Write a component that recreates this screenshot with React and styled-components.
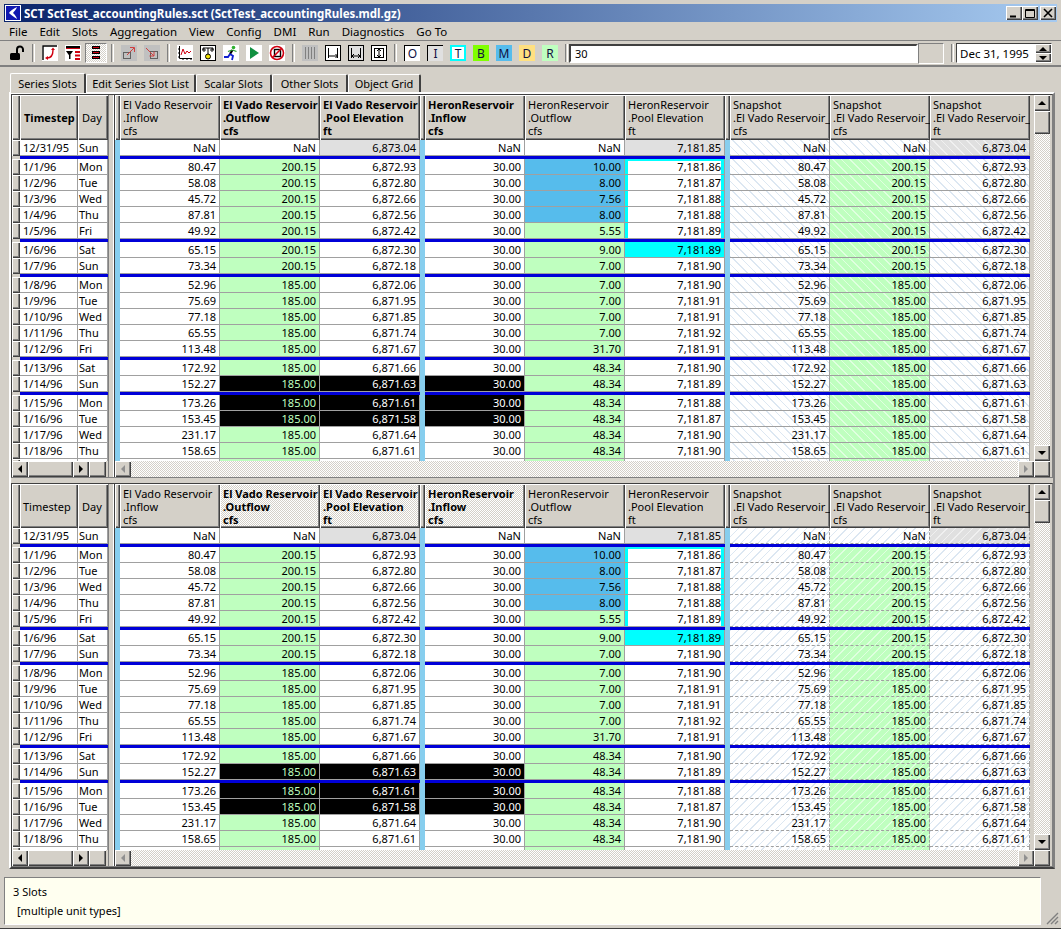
import React from 'react'
import styled, { createGlobalStyle, css } from 'styled-components'

const GREY = '#d4d0c8'
const BLUE = '#56bcec'
const GREEN = '#bfffbf'
const CYAN = '#00ffff'

const raised = css`
    box-shadow: inset 1px 1px 0 #fff, inset -1px -1px 0 #404040, inset -2px -2px 0 #808080;
`
const dither = css`
    background: repeating-conic-gradient(#fff 0 25%, ${GREY} 0 50%) 0 0 / 2px 2px;
`

const rows = [
    ['1/1/96', 'Mon', '80.47', '200.15', '6,872.93', '10.00', '7,181.86'],
    ['1/2/96', 'Tue', '58.08', '200.15', '6,872.80', '8.00', '7,181.87'],
    ['1/3/96', 'Wed', '45.72', '200.15', '6,872.66', '7.56', '7,181.88'],
    ['1/4/96', 'Thu', '87.81', '200.15', '6,872.56', '8.00', '7,181.88'],
    ['1/5/96', 'Fri', '49.92', '200.15', '6,872.42', '5.55', '7,181.89', true],
    ['1/6/96', 'Sat', '65.15', '200.15', '6,872.30', '9.00', '7,181.89'],
    ['1/7/96', 'Sun', '73.34', '200.15', '6,872.18', '7.00', '7,181.90', true],
    ['1/8/96', 'Mon', '52.96', '185.00', '6,872.06', '7.00', '7,181.90'],
    ['1/9/96', 'Tue', '75.69', '185.00', '6,871.95', '7.00', '7,181.91'],
    ['1/10/96', 'Wed', '77.18', '185.00', '6,871.85', '7.00', '7,181.91'],
    ['1/11/96', 'Thu', '65.55', '185.00', '6,871.74', '7.00', '7,181.92'],
    ['1/12/96', 'Fri', '113.48', '185.00', '6,871.67', '31.70', '7,181.91', true],
    ['1/13/96', 'Sat', '172.92', '185.00', '6,871.66', '48.34', '7,181.90'],
    ['1/14/96', 'Sun', '152.27', '185.00', '6,871.63', '48.34', '7,181.89', true],
    ['1/15/96', 'Mon', '173.26', '185.00', '6,871.61', '48.34', '7,181.88'],
    ['1/16/96', 'Tue', '153.45', '185.00', '6,871.58', '48.34', '7,181.87'],
    ['1/17/96', 'Wed', '231.17', '185.00', '6,871.64', '48.34', '7,181.90'],
    ['1/18/96', 'Thu', '158.65', '185.00', '6,871.61', '48.34', '7,181.90'],
    ['', '', '', '', '', '', ''],
]

const heads = [
    [
        { a: 'El Vado Reservoir', b: '.Inflow', c: 'cfs' },
        { a: 'El Vado Reservoir', b: '.Outflow', c: 'cfs', bold: true },
        { a: 'El Vado Reservoir', b: '.Pool Elevation', c: 'ft', bold: true },
    ],
    [
        { a: 'HeronReservoir', b: '.Inflow', c: 'cfs', bold: true },
        { a: 'HeronReservoir', b: '.Outflow', c: 'cfs' },
        { a: 'HeronReservoir', b: '.Pool Elevation', c: 'ft' },
    ],
    [
        { a: 'Snapshot', b: '.El Vado Reservoir_', c: 'cfs' },
        { a: 'Snapshot', b: '.El Vado Reservoir_', c: 'cfs' },
        { a: 'Snapshot', b: '.El Vado Reservoir_', c: 'ft' },
    ],
]

const first = [
    [['NaN', 'white'], ['NaN', 'white'], ['6,873.04', 'grey']],
    [['NaN', 'white'], ['NaN', 'white'], ['7,181.85', 'grey']],
    [['NaN', 'white'], ['NaN', 'white'], ['6,873.04', 'grey']],
]

// cells of one day for the three groups of columns
const cellsFor = (r, i) => {
    const black = i >= 13 && i <= 15
    const heronOut = i < 4 ? 'blue' : 'green'
    const heronPool = i === 5 ? 'cyan' : i === 0 ? 'cyanTop' : i < 5 ? 'cyanSide' : 'white'
    return [
        [[r[2], 'white'], [r[3], black ? 'blackGreen' : 'green'], [r[4], black ? 'black' : 'white']],
        [[r[0] ? '30.00' : '', black ? 'black' : 'white'], [r[5], heronOut], [r[6], heronPool]],
        [[r[2], 'white'], [r[3], 'green'], [r[4], 'white']],
    ]
}

const LockIcon = () => (
    <svg width="16" height="16" viewBox="0 0 16 16">
        <rect x="1" y="8" width="10" height="7" rx="1.5" fill="#000" />
        <path d="M8 8V4.5a3 3 0 0 1 6 0V7" fill="none" stroke="#000" strokeWidth="2" />
    </svg>
)
const ArrowsIcon = () => (
    <svg width="16" height="16" viewBox="0 0 16 16">
        <rect width="16" height="16" fill="#fff" />
        <path d="M1 15V1h14" fill="none" stroke="#000" strokeWidth="1.4" />
        <path d="M5 13c4 0 6-3 6-8" fill="none" stroke="#d00010" strokeWidth="1.4" />
        <path d="M9 5l2-2.500 2 2.500zM6 11v4l-3-2z" fill="#d00010" />
    </svg>
)
const FilterIcon = () => (
    <svg width="16" height="16" viewBox="0 0 16 16">
        <rect width="16" height="16" fill="#fff" />
        <rect x="1" y="1" width="14" height="2" fill="#000" />
        <rect x="1" y="3" width="14" height="1" fill="#d00010" />
        <path d="M1 6h7l-3.500 5z" fill="#000" />
        <rect x="4" y="10" width="1.500" height="4" fill="#000" />
        <path d="M10 6h5v2h-5zM10 9.500h5v2h-5zM10 13h5v2h-5z" fill="#d00010" />
    </svg>
)
const StackIcon = () => (
    <svg width="10" height="14" viewBox="0 0 10 14">
        <rect x="1" y="0" width="8" height="3" fill="#000" />
        <rect x="2" y="1" width="6" height="1" fill="#d00010" />
        <rect x="1" y="5" width="8" height="3" fill="#000" />
        <rect x="2" y="6" width="6" height="1" fill="#d00010" />
        <rect x="1" y="10" width="8" height="3" fill="#000" />
        <rect x="2" y="11" width="6" height="1" fill="#d00010" />
    </svg>
)
const ExportIcon = () => (
    <svg width="16" height="16" viewBox="0 0 16 16">
        <rect width="16" height="16" fill="#c0c0c0" />
        <rect x="2.500" y="7.500" width="7" height="6" fill="none" stroke="#606060" />
        <path d="M6 10l7-7M9 2.500h4.500V7" fill="none" stroke="#d04040" />
    </svg>
)
const ImportIcon = () => (
    <svg width="16" height="16" viewBox="0 0 16 16">
        <rect width="16" height="16" fill="#c0c0c0" />
        <rect x="6.500" y="6.500" width="7" height="7" fill="none" stroke="#606060" />
        <path d="M2 3l8 8M10 6.500V11H5.500" fill="none" stroke="#d04040" />
    </svg>
)
const ChartIcon = () => (
    <svg width="16" height="16" viewBox="0 0 16 16">
        <rect width="16" height="16" fill="#fff" />
        <path d="M2.500 1v12.500H15M1 4h1.500M1 8h1.500M1 12h1.500M6 13.500V15M10 13.500V15M14 13.500V15" fill="none" stroke="#000" />
        <path d="M4 10l2-6 2 5 2-3 2 2 2-2" fill="none" stroke="#d00010" />
    </svg>
)
const GaugeIcon = () => (
    <svg width="16" height="16" viewBox="0 0 16 16">
        <rect x=".5" y=".5" width="15" height="15" fill="#fff" stroke="#000" />
        <path d="M3 5V3h10v2M8 3v7" fill="none" stroke="#000" />
        <circle cx="4" cy="5" r="1.200" fill="none" stroke="#000" />
        <circle cx="12" cy="5" r="1.200" fill="none" stroke="#000" />
        <circle cx="8" cy="11.500" r="2.500" fill="#f0e000" stroke="#000" />
    </svg>
)
const RunnerIcon = () => (
    <svg width="16" height="16" viewBox="0 0 16 16">
        <rect width="16" height="16" fill="#fff" />
        <circle cx="10.500" cy="2.500" r="1.800" fill="#30b030" />
        <path d="M9.500 5L7 9" stroke="#000" strokeWidth="2.200" />
        <path d="M9.500 5l4 1.500M9 5L5 6.500" stroke="#30a030" strokeWidth="1.300" fill="none" />
        <path d="M7 9l3 2-1 4M7 9l-2 3H1" stroke="#1020d0" strokeWidth="1.800" fill="none" />
    </svg>
)
const PlayIcon = () => (
    <svg width="16" height="16" viewBox="0 0 16 16">
        <rect width="16" height="16" fill="#fff" />
        <path d="M4 2l9 6-9 6z" fill="#109040" />
    </svg>
)
const StopIcon = () => (
    <svg width="16" height="16" viewBox="0 0 16 16">
        <rect width="16" height="16" fill="#fff" />
        <rect x="5.500" y="4.500" width="6" height="7" fill="none" stroke="#000" strokeWidth="1.400" />
        <circle cx="8" cy="8" r="6.500" fill="none" stroke="#d00010" strokeWidth="1.600" />
        <path d="M3.500 12.500L12.500 3.500" stroke="#d00010" strokeWidth="1.600" />
    </svg>
)
const BarsIcon = () => (
    <svg width="16" height="16" viewBox="0 0 16 16">
        <rect width="16" height="16" fill="#c0c0c0" />
        <path d="M3.500 2v12M6.500 2v12M9.500 2v12M12.500 2v12" stroke="#808080" />
    </svg>
)
const WidthIcon = ({ bars }) => (
    <svg width="16" height="16" viewBox="0 0 16 16">
        <rect x=".5" y=".5" width="15" height="15" fill="#fff" stroke="#000" />
        <path d="M3.500 3v10M3.500 11h9M10.500 9l2 2-2 2" fill="none" stroke="#000" />
        {bars && <path d="M12.500 3v10" stroke="#000" />}
    </svg>
)
const NarrowIcon = () => (
    <svg width="16" height="16" viewBox="0 0 16 16">
        <rect x=".5" y=".5" width="15" height="15" fill="#e0e0e0" stroke="#000" />
        <path d="M3.500 3v10M12.500 3v10M4 11h8M6 9l-2 2 2 2M10 9l2 2-2 2" fill="none" stroke="#000" />
    </svg>
)
const FitIcon = () => (
    <svg width="16" height="16" viewBox="0 0 16 16">
        <rect x=".5" y=".5" width="15" height="15" fill="#fff" stroke="#000" />
        <path d="M3 3.500h10M3 12.500h10M3.500 3v10M12.500 3v10M8 4v8M6 6l2-2 2 2M6 10l2 2 2-2" fill="none" stroke="#000" />
    </svg>
)

const ArrowGlyph = ({ dir, off }) => (
    <svg width="8" height="8" viewBox="0 0 8 8">
        <path
            d={{ left: 'M6 0v8L2 4z', right: 'M2 0v8l4-4z', up: 'M0 6h8L4 2z', down: 'M0 2h8L4 6z' }[dir]}
            fill={off ? '#909090' : '#000'}
        />
    </svg>
)

const HeaderCell = ({ head, hatch }) => (
    <SlotHead $bold={head.bold} $dither={hatch && head.bold}>
        <span>{head.a}</span>
        <span>{head.b}</span>
        <span>{head.c}</span>
    </SlotHead>
)

const BodyGroups = ({ groups, lower }) => (
    <>
        {groups.map((group, g) => (
            <React.Fragment key={g}>
                <Bar />
                {group.map(([text, tone], c) => (
                    <Cell key={c} $tone={tone} $snap={g === 2} $lower={lower}>
                        {text}
                    </Cell>
                ))}
            </React.Fragment>
        ))}
    </>
)

const Separator = () => (
    <SepRow>
        <Bar />
        <SepLine />
        <Bar />
        <SepLine />
        <Bar />
        <SepLine />
    </SepRow>
)

const SlotPane = ({ lower }) => (
    <Pane $lower={lower}>
        <LeftSide>
            <HeadRow $lower={lower}>
                <Grip />
                <TimeHead $lower={lower}>Timestep</TimeHead>
                <DayHead>Day</DayHead>
            </HeadRow>
            <Clip>
                <LeftRow>
                    <Grip />
                    <DateCell>12/31/95</DateCell>
                    <DayCell>Sun</DayCell>
                </LeftRow>
                <LeftSep>
                    <SepLine />
                </LeftSep>
                {rows.map((r, i) => (
                    <React.Fragment key={i}>
                        <LeftRow>
                            <Grip />
                            <DateCell>{r[0]}</DateCell>
                            <DayCell>{r[1]}</DayCell>
                        </LeftRow>
                        {r[7] && (
                            <LeftSep>
                                <SepLine />
                            </LeftSep>
                        )}
                    </React.Fragment>
                ))}
            </Clip>
            <HScroll>
                <ScrollBtn>
                    <ArrowGlyph dir="left" />
                </ScrollBtn>
                <Thumb $w={45} />
                <ScrollBtn>
                    <ArrowGlyph dir="right" />
                </ScrollBtn>
                <Thumb $w={17} />
            </HScroll>
        </LeftSide>
        <Gutter />
        <RightSide>
            <HeadRow $lower={lower}>
                {heads.map((group, g) => (
                    <React.Fragment key={g}>
                        <BarHead />
                        {group.map((head, c) => (
                            <HeaderCell key={c} head={head} hatch={lower} />
                        ))}
                    </React.Fragment>
                ))}
            </HeadRow>
            <Clip>
                <DataRow>
                    <BodyGroups groups={first} lower={lower} />
                </DataRow>
                <Separator />
                {rows.map((r, i) => (
                    <React.Fragment key={i}>
                        <DataRow>
                            <BodyGroups groups={cellsFor(r, i)} lower={lower} />
                        </DataRow>
                        {r[7] && <Separator />}
                    </React.Fragment>
                ))}
            </Clip>
            <HScroll>
                <ScrollBtn>
                    <ArrowGlyph dir="left" off />
                </ScrollBtn>
                <Track />
                <ScrollBtn>
                    <ArrowGlyph dir="right" off />
                </ScrollBtn>
            </HScroll>
        </RightSide>
        <VScroll>
            <ScrollBtn>
                <ArrowGlyph dir="up" />
            </ScrollBtn>
            <VThumb />
            <Track />
            <ScrollBtn>
                <ArrowGlyph dir="down" />
            </ScrollBtn>
            <Corner />
        </VScroll>
    </Pane>
)

const App = () => {
    return (
        <>
            <Global />
            <Window>
                <TitleBar>
                    <Logo>
                        <svg width="16" height="16" viewBox="0 0 16 16">
                            <rect x=".5" y=".5" width="15" height="15" fill="#1018b0" stroke="#fff" />
                            <path d="M12 2C8 4 5 6 4 8c2 2 5 4 8 6-1-3-2-4-4-6 1-2 3-3 4-6z" fill="#fff" />
                        </svg>
                    </Logo>
                    <TitleText>SCT SctTest_accountingRules.sct (SctTest_accountingRules.mdl.gz)</TitleText>
                    <WinButtons>
                        <WinButton>
                            <svg width="10" height="10" viewBox="0 0 10 10"><path d="M1 7.500h6v2H1z" fill="#000" /></svg>
                        </WinButton>
                        <WinButton>
                            <svg width="10" height="10" viewBox="0 0 10 10"><path d="M.5 1.500h9v8h-9zM.5 2.500h9" fill="none" stroke="#000" /></svg>
                        </WinButton>
                        <WinButton $gap>
                            <svg width="10" height="10" viewBox="0 0 10 10"><path d="M1 1l8 8M9 1l-8 8" fill="none" stroke="#000" strokeWidth="1.600" /></svg>
                        </WinButton>
                    </WinButtons>
                </TitleBar>

                <MenuBar>
                    {['File', 'Edit', 'Slots', 'Aggregation', 'View', 'Config', 'DMI', 'Run', 'Diagnostics', 'Go To'].map((m) => (
                        <MenuItem key={m}>{m}</MenuItem>
                    ))}
                </MenuBar>

                <Toolbar>
                    <Tool><LockIcon /></Tool>
                    <ToolSep />
                    <Tool><ArrowsIcon /></Tool>
                    <Tool><FilterIcon /></Tool>
                    <ActiveTool><StackIcon /></ActiveTool>
                    <ToolSep />
                    <Tool><ExportIcon /></Tool>
                    <Tool><ImportIcon /></Tool>
                    <ToolSep />
                    <Tool><ChartIcon /></Tool>
                    <Tool><GaugeIcon /></Tool>
                    <Tool><RunnerIcon /></Tool>
                    <Tool><PlayIcon /></Tool>
                    <Tool><StopIcon /></Tool>
                    <ToolSep />
                    <Tool><BarsIcon /></Tool>
                    <Tool><WidthIcon bars /></Tool>
                    <Tool><NarrowIcon /></Tool>
                    <Tool><FitIcon /></Tool>
                    <ToolSep />
                    <LetterTool $bg="#fff" $corner>O</LetterTool>
                    <LetterTool $bg="#e0e0e0" $corner>I</LetterTool>
                    <LetterTool $bg="#fff" $ring={CYAN}>T</LetterTool>
                    <LetterTool $bg="#80ff00">B</LetterTool>
                    <LetterTool $bg={BLUE}>M</LetterTool>
                    <LetterTool $bg="#ffe080">D</LetterTool>
                    <LetterTool $bg={GREEN}>R</LetterTool>
                    <ToolSep />
                    <ValueInput>30</ValueInput>
                    <BlankBox />
                    <ToolSep />
                    <DateSpin>
                        <span>Dec 31, 1995</span>
                        <SpinButtons>
                            <SpinBtn><ArrowGlyph dir="up" /></SpinBtn>
                            <SpinBtn><ArrowGlyph dir="down" /></SpinBtn>
                        </SpinButtons>
                    </DateSpin>
                </Toolbar>

                <TabBar>
                    <Tab $active $w={76}>Series Slots</Tab>
                    <Tab $w={110}>Edit Series Slot List</Tab>
                    <Tab $w={76}>Scalar Slots</Tab>
                    <Tab $w={76}>Other Slots</Tab>
                    <Tab $w={73}>Object Grid</Tab>
                </TabBar>

                <TabPanel>
                    <SlotPane />
                    <SlotPane lower />
                </TabPanel>

                <InfoRow>
                    <InfoBox>
                        <div>3 Slots</div>
                        <InfoUnits>[multiple unit types]</InfoUnits>
                    </InfoBox>
                    <ResizeGrip>
                        <svg width="13" height="13" viewBox="0 0 13 13">
                            <path d="M12 1L1 12M12 5L5 12M12 9L9 12" stroke="#808080" strokeWidth="1.400" />
                        </svg>
                    </ResizeGrip>
                </InfoRow>
            </Window>
        </>
    )
}

export default App

const Global = createGlobalStyle`
    html, body {
        margin: 0;
        padding: 0;
        background: ${GREY};
    }
    * {
        box-sizing: border-box;
    }
`

const Window = styled.div`
    width: 1061px;
    height: 929px;
    padding-top: 4px;
    background: ${GREY};
    font-family: "Noto Sans", "Liberation Sans", sans-serif;
    font-size: 11px;
    color: #000;
    overflow: hidden;
    border-bottom: 1px solid #404040;
`

const TitleBar = styled.div`
    height: 18px;
    margin: 0 4px;
    display: flex;
    align-items: center;
    padding: 0 1px 0 1px;
    background: linear-gradient(to right, #0a246a, #a6caf0);
`

const Logo = styled.div`
    display: flex;
    width: 19px;
`

const TitleText = styled.div`
    flex: 1;
    color: #fff;
    font-weight: 700;
    font-size: 11.500px;
    white-space: nowrap;
`

const WinButtons = styled.div`
    display: flex;
`

const WinButton = styled.div`
    width: 16px;
    height: 14px;
    margin-left: ${(p) => (p.$gap ? '2px' : '0')};
    background: ${GREY};
    display: flex;
    align-items: center;
    justify-content: center;
    ${raised}
`

const MenuBar = styled.div`
    height: 18px;
    display: flex;
    align-items: center;
    padding-left: 3px;
    font-size: 11.500px;
`

const MenuItem = styled.div`
    padding: 0 6px;
`

const Toolbar = styled.div`
    height: 27px;
    border-top: 1px solid #808080;
    border-bottom: 2px solid #808080;
    display: flex;
    align-items: center;
    padding-left: 9px;
    gap: 7px;
`

const Tool = styled.div`
    width: 16px;
    height: 16px;
    display: flex;
    flex: none;
`

const ActiveTool = styled.div`
    width: 22px;
    height: 20px;
    flex: none;
    margin: 0 -3px;
    display: flex;
    align-items: center;
    justify-content: center;
    ${dither}
    border: 1px solid #fff;
    border-top-color: #808080;
    border-left-color: #808080;
`

const ToolSep = styled.div`
    width: 3px;
    height: 18px;
    flex: none;
    border-left: 1px solid #808080;
    border-right: 1px solid #fff;
`

const LetterTool = styled.div`
    width: 16px;
    height: 16px;
    flex: none;
    display: flex;
    align-items: center;
    justify-content: center;
    font-size: 12px;
    color: #101040;
    background: ${(p) => p.$bg};
    ${(p) => p.$ring && `border: 2px solid ${p.$ring};`}
    ${(p) => p.$corner && 'border-top: 1px solid #000; border-left: 1px solid #000;'}
`

const ValueInput = styled.div`
    width: 349px;
    height: 19px;
    flex: none;
    margin-left: -6px;
    padding-left: 4px;
    line-height: 16px;
    background: #fff;
    border: 2px solid #404040;
    border-right-color: #fff;
    border-bottom-color: #fff;
`

const BlankBox = styled.div`
    width: 26px;
    height: 21px;
    flex: none;
    margin-left: -7px;
    border: 1px solid #fff;
    border-top-color: #808080;
    border-left-color: #808080;
`

const DateSpin = styled.div`
    width: 96px;
    height: 20px;
    flex: none;
    margin-left: -5px;
    padding-left: 3px;
    display: flex;
    align-items: center;
    justify-content: space-between;
    background: #fff;
    border: 1px solid #404040;
    border-right-color: #fff;
    border-bottom-color: #fff;
    font-size: 11.500px;
`

const SpinButtons = styled.div`
    display: flex;
    flex-direction: column;
    width: 16px;
`

const SpinBtn = styled.div`
    height: 9px;
    background: ${GREY};
    display: flex;
    align-items: center;
    justify-content: center;
    overflow: hidden;
    ${raised}
`

const TabBar = styled.div`
    height: 25px;
    display: flex;
    align-items: flex-end;
    padding-left: 10px;
    gap: 0;
`

const Tab = styled.div`
    width: ${(p) => p.$w}px;
    height: ${(p) => (p.$active ? 20 : 18)}px;
    display: flex;
    align-items: center;
    justify-content: center;
    background: ${GREY};
    border: 1px solid #fff;
    border-bottom: none;
    border-right: 2px solid #404040;
    border-radius: 2px 2px 0 0;
    margin-bottom: ${(p) => (p.$active ? '-1px' : '0')};
    position: relative;
    z-index: ${(p) => (p.$active ? 1 : 0)};
`

const TabPanel = styled.div`
    width: 1046px;
    height: 777px;
    margin-left: 9px;
    border: 2px solid #fff;
    border-right-color: #808080;
    border-bottom-color: #404040;
    display: flex;
    flex-direction: column;
    gap: 5px;
`

const Pane = styled.div`
    height: ${(p) => (p.$lower ? 384 : 384)}px;
    flex: none;
    display: flex;
    border: 1px solid #404040;
    border-right-color: #808080;
    border-bottom-color: #808080;
`

const LeftSide = styled.div`
    width: 96px;
    flex: none;
    display: flex;
    flex-direction: column;
`

const Gutter = styled.div`
    width: 6px;
    flex: none;
    border-left: 1px solid #808080;
    border-right: 1px solid #fff;
`

const RightSide = styled.div`
    width: 920px;
    flex: none;
    display: flex;
    flex-direction: column;
    border-left: 1px solid #404040;
`

const VScroll = styled.div`
    width: 16px;
    flex: none;
    display: flex;
    flex-direction: column;
`

const HeadRow = styled.div`
    height: ${(p) => (p.$lower ? 44 : 45)}px;
    flex: none;
    display: flex;
    align-items: stretch;
`

const Clip = styled.div`
    flex: 1;
    min-height: 0;
    overflow: hidden;
    display: flex;
    flex-direction: column;
`

const Grip = styled.div`
    width: 8px;
    flex: none;
    background: ${GREY};
    ${raised}
`

const TimeHead = styled.div`
    width: 58px;
    flex: none;
    display: flex;
    align-items: center;
    padding-left: ${(p) => (p.$lower ? 3 : 4)}px;
    font-weight: ${(p) => (p.$lower ? 400 : 700)};
    overflow: hidden;
    white-space: nowrap;
    ${raised}
`

const DayHead = styled.div`
    width: 30px;
    flex: none;
    display: flex;
    align-items: center;
    padding-left: 4px;
    ${raised}
`

const SlotHead = styled.div`
    width: 100px;
    flex: none;
    padding: 3px 2px 0 3px;
    display: flex;
    flex-direction: column;
    line-height: 13px;
    overflow: hidden;
    white-space: nowrap;
    font-weight: ${(p) => (p.$bold ? 700 : 400)};
    ${(p) => p.$dither && dither}
    ${raised}
`

const BarHead = styled.div`
    width: 5px;
    flex: none;
    ${raised}
`

const LeftRow = styled.div`
    height: 16px;
    flex: none;
    display: flex;
`

const DateCell = styled.div`
    width: 58px;
    flex: none;
    padding-left: 3px;
    line-height: 15px;
    background: #fff;
    border-right: 1px solid #a0a0a0;
    border-bottom: 1px solid #a0a0a0;
    white-space: nowrap;
`

const DayCell = styled(DateCell)`
    width: 30px;
    padding-left: 1px;
`

const LeftSep = styled.div`
    height: 3px;
    flex: none;
    padding-left: 8px;
    display: flex;
`

const DataRow = styled.div`
    height: 16px;
    flex: none;
    display: flex;
`

const Bar = styled.div`
    width: 5px;
    flex: none;
    background: #87ceee;
`

const SepRow = styled.div`
    height: 3px;
    flex: none;
    display: flex;
`

const SepLine = styled.div`
    width: 300px;
    flex: 1 1 300px;
    max-width: 300px;
    background: #0000d8;
`

const tones = {
    white: { bg: '#fff', line: '#dce7f2', fg: '#000' },
    green: { bg: GREEN, line: '#e0ffe0', fg: '#000' },
    grey: { bg: '#e0e0e0', line: '#f0f0f0', fg: '#000' },
    blue: { bg: BLUE, line: BLUE, fg: '#000' },
    cyan: { bg: CYAN, line: CYAN, fg: '#000' },
    cyanSide: { bg: '#fff', line: '#fff', fg: '#000', shadow: `inset 3px 0 ${CYAN}, inset -3px 0 ${CYAN}` },
    cyanTop: { bg: '#fff', line: '#fff', fg: '#000', shadow: `inset 3px 0 ${CYAN}, inset -3px 0 ${CYAN}, inset 0 2px ${CYAN}` },
    black: { bg: '#000', line: '#000', fg: '#fff' },
    blackGreen: { bg: '#000', line: '#000', fg: GREEN },
}

const Cell = styled.div`
    width: 100px;
    flex: none;
    padding-right: 3px;
    line-height: 15px;
    text-align: right;
    white-space: nowrap;
    color: ${(p) => tones[p.$tone].fg};
    background-color: ${(p) => tones[p.$tone].bg};
    box-shadow: ${(p) => tones[p.$tone].shadow || 'none'};
    border-right: 1px ${(p) => (p.$snap && p.$lower ? 'dashed' : 'solid')} #a0a0a0;
    border-bottom: 1px ${(p) => (p.$snap && p.$lower ? 'dashed' : 'solid')} #a0a0a0;
    ${(p) =>
        p.$snap &&
        `background-image: repeating-linear-gradient(${p.$lower ? 135 : 45}deg, ${tones[p.$tone].line} 0 1px, transparent 1px 6px);`}
`

const HScroll = styled.div`
    height: 16px;
    flex: none;
    display: flex;
`

const ScrollBtn = styled.div`
    width: 16px;
    height: 16px;
    flex: none;
    background: ${GREY};
    display: flex;
    align-items: center;
    justify-content: center;
    ${raised}
`

const Thumb = styled.div`
    width: ${(p) => p.$w}px;
    flex: none;
    background: ${GREY};
    ${raised}
`

const Track = styled.div`
    flex: 1;
    ${dither}
`

const VThumb = styled.div`
    height: 23px;
    flex: none;
    background: ${GREY};
    ${raised}
`

const Corner = styled.div`
    height: 16px;
    flex: none;
    background: ${GREY};
    ${raised}
`

const InfoRow = styled.div`
    display: flex;
    margin-top: 8px;
    padding-left: 4px;
`

const InfoBox = styled.div`
    width: 1037px;
    height: 48px;
    padding: 7px 0 0 8px;
    background: #fffff0;
    border: 1px solid #808080;
    border-right-color: #fff;
    border-bottom-color: #fff;
    line-height: 14px;
`

const InfoUnits = styled.div`
    margin: 5px 0 0 4px;
`

const ResizeGrip = styled.div`
    flex: 1;
    display: flex;
    align-items: flex-end;
    justify-content: flex-end;
    padding: 0 2px 0 0;
`
